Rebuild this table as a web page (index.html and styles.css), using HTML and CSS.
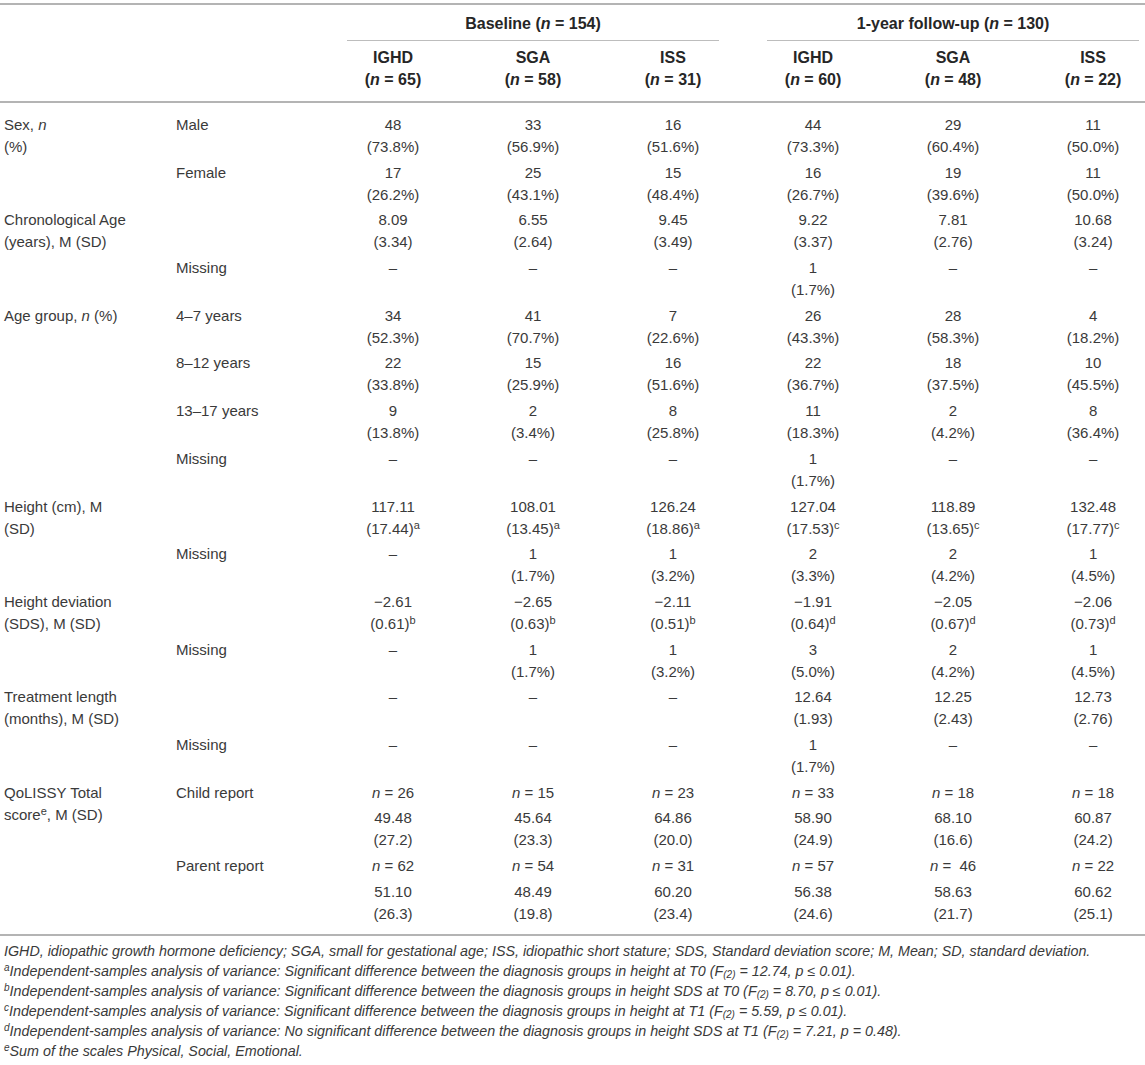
FILE: index.html
```html
<!DOCTYPE html>
<html lang="en">
<head>
<meta charset="utf-8">
<title>Table</title>
<link rel="stylesheet" href="styles.css">
</head>
<body>
<div class="page">
  <div class="clip">
    <table class="tbl">
      <colgroup>
        <col class="c-label">
        <col class="c-sub">
        <col class="c-data"><col class="c-data"><col class="c-data">
        <col class="c-data"><col class="c-data"><col class="c-data">
      </colgroup>
      <thead>
        <tr class="h1">
          <th colspan="2"></th>
          <th colspan="3"><div class="grp">Baseline (<i>n</i> = 154)</div></th>
          <th colspan="3"><div class="grp">1-year follow-up (<i>n</i> = 130)</div></th>
        </tr>
        <tr class="h2">
          <th></th><th></th>
          <th>IGHD<br>(<i>n</i> = 65)</th>
          <th>SGA<br>(<i>n</i> = 58)</th>
          <th>ISS<br>(<i>n</i> = 31)</th>
          <th>IGHD<br>(<i>n</i> = 60)</th>
          <th>SGA<br>(<i>n</i> = 48)</th>
          <th>ISS<br>(<i>n</i> = 22)</th>
        </tr>
      </thead>
      <tbody>
        <tr class="first">
          <td class="lab">Sex, <i>n</i><br>(%)</td><td class="sub">Male</td>
          <td>48<br>(73.8%)</td><td>33<br>(56.9%)</td><td>16<br>(51.6%)</td>
          <td>44<br>(73.3%)</td><td>29<br>(60.4%)</td><td>11<br>(50.0%)</td>
        </tr>
        <tr>
          <td class="lab"></td><td class="sub">Female</td>
          <td>17<br>(26.2%)</td><td>25<br>(43.1%)</td><td>15<br>(48.4%)</td>
          <td>16<br>(26.7%)</td><td>19<br>(39.6%)</td><td>11<br>(50.0%)</td>
        </tr>
        <tr>
          <td class="lab">Chronological Age<br>(years), M (SD)</td><td class="sub"></td>
          <td>8.09<br>(3.34)</td><td>6.55<br>(2.64)</td><td>9.45<br>(3.49)</td>
          <td>9.22<br>(3.37)</td><td>7.81<br>(2.76)</td><td>10.68<br>(3.24)</td>
        </tr>
        <tr>
          <td class="lab"></td><td class="sub">Missing</td>
          <td>–</td><td>–</td><td>–</td>
          <td>1<br>(1.7%)</td><td>–</td><td>–</td>
        </tr>
        <tr>
          <td class="lab">Age group, <i>n</i> (%)</td><td class="sub">4–7 years</td>
          <td>34<br>(52.3%)</td><td>41<br>(70.7%)</td><td>7<br>(22.6%)</td>
          <td>26<br>(43.3%)</td><td>28<br>(58.3%)</td><td>4<br>(18.2%)</td>
        </tr>
        <tr>
          <td class="lab"></td><td class="sub">8–12 years</td>
          <td>22<br>(33.8%)</td><td>15<br>(25.9%)</td><td>16<br>(51.6%)</td>
          <td>22<br>(36.7%)</td><td>18<br>(37.5%)</td><td>10<br>(45.5%)</td>
        </tr>
        <tr>
          <td class="lab"></td><td class="sub">13–17 years</td>
          <td>9<br>(13.8%)</td><td>2<br>(3.4%)</td><td>8<br>(25.8%)</td>
          <td>11<br>(18.3%)</td><td>2<br>(4.2%)</td><td>8<br>(36.4%)</td>
        </tr>
        <tr>
          <td class="lab"></td><td class="sub">Missing</td>
          <td>–</td><td>–</td><td>–</td>
          <td>1<br>(1.7%)</td><td>–</td><td>–</td>
        </tr>
        <tr>
          <td class="lab">Height (cm), M<br>(SD)</td><td class="sub"></td>
          <td>117.11<br>(17.44)<sup>a</sup></td><td>108.01<br>(13.45)<sup>a</sup></td><td>126.24<br>(18.86)<sup>a</sup></td>
          <td>127.04<br>(17.53)<sup>c</sup></td><td>118.89<br>(13.65)<sup>c</sup></td><td>132.48<br>(17.77)<sup>c</sup></td>
        </tr>
        <tr>
          <td class="lab"></td><td class="sub">Missing</td>
          <td>–</td><td>1<br>(1.7%)</td><td>1<br>(3.2%)</td>
          <td>2<br>(3.3%)</td><td>2<br>(4.2%)</td><td>1<br>(4.5%)</td>
        </tr>
        <tr>
          <td class="lab">Height deviation<br>(SDS), M (SD)</td><td class="sub"></td>
          <td>−2.61<br>(0.61)<sup>b</sup></td><td>−2.65<br>(0.63)<sup>b</sup></td><td>−2.11<br>(0.51)<sup>b</sup></td>
          <td>−1.91<br>(0.64)<sup>d</sup></td><td>−2.05<br>(0.67)<sup>d</sup></td><td>−2.06<br>(0.73)<sup>d</sup></td>
        </tr>
        <tr>
          <td class="lab"></td><td class="sub">Missing</td>
          <td>–</td><td>1<br>(1.7%)</td><td>1<br>(3.2%)</td>
          <td>3<br>(5.0%)</td><td>2<br>(4.2%)</td><td>1<br>(4.5%)</td>
        </tr>
        <tr>
          <td class="lab">Treatment length<br>(months), M (SD)</td><td class="sub"></td>
          <td>–</td><td>–</td><td>–</td>
          <td>12.64<br>(1.93)</td><td>12.25<br>(2.43)</td><td>12.73<br>(2.76)</td>
        </tr>
        <tr>
          <td class="lab"></td><td class="sub">Missing</td>
          <td>–</td><td>–</td><td>–</td>
          <td>1<br>(1.7%)</td><td>–</td><td>–</td>
        </tr>
        <tr>
          <td class="lab" rowspan="4">QoLISSY Total<br>score<sup>e</sup>, M (SD)</td><td class="sub">Child report</td>
          <td><i>n</i> = 26</td><td><i>n</i> = 15</td><td><i>n</i> = 23</td>
          <td><i>n</i> = 33</td><td><i>n</i> = 18</td><td><i>n</i> = 18</td>
        </tr>
        <tr>
          <td class="sub"></td>
          <td>49.48<br>(27.2)</td><td>45.64<br>(23.3)</td><td>64.86<br>(20.0)</td>
          <td>58.90<br>(24.9)</td><td>68.10<br>(16.6)</td><td>60.87<br>(24.2)</td>
        </tr>
        <tr>
          <td class="sub">Parent report</td>
          <td><i>n</i> = 62</td><td><i>n</i> = 54</td><td><i>n</i> = 31</td>
          <td><i>n</i> = 57</td><td><i>n</i> =&nbsp; 46</td><td><i>n</i> = 22</td>
        </tr>
        <tr class="last">
          <td class="sub"></td>
          <td>51.10<br>(26.3)</td><td>48.49<br>(19.8)</td><td>60.20<br>(23.4)</td>
          <td>56.38<br>(24.6)</td><td>58.63<br>(21.7)</td><td>60.62<br>(25.1)</td>
        </tr>
      </tbody>
    </table>
  </div>
  <div class="notes">
    <p>IGHD, idiopathic growth hormone deficiency; SGA, small for gestational age; ISS, idiopathic short stature; SDS, Standard deviation score; M, Mean; SD, standard deviation.</p>
    <p><sup>a</sup>Independent-samples analysis of variance: Significant difference between the diagnosis groups in height at T0 (F<sub>(2)</sub> = 12.74, p ≤ 0.01).</p>
    <p><sup>b</sup>Independent-samples analysis of variance: Significant difference between the diagnosis groups in height SDS at T0 (F<sub>(2)</sub> = 8.70, p ≤ 0.01).</p>
    <p><sup>c</sup>Independent-samples analysis of variance: Significant difference between the diagnosis groups in height at T1 (F<sub>(2)</sub> = 5.59, p ≤ 0.01).</p>
    <p><sup>d</sup>Independent-samples analysis of variance: No significant difference between the diagnosis groups in height SDS at T1 (F<sub>(2)</sub> = 7.21, p = 0.48).</p>
    <p><sup>e</sup>Sum of the scales Physical, Social, Emotional.</p>
  </div>
</div>
</body>
</html>
```

FILE: styles.css
```css
html, body {
  margin: 0;
  padding: 0;
  background: #ffffff;
  overflow: hidden;
}

.page {
  width: 1145px;
  padding-top: 3px;
  font-family: "Liberation Sans", Arial, sans-serif;
  color: #3a3a3a;
}

.clip {
  width: 1145px;
  overflow: hidden;
}

.tbl {
  width: 1163px;
  table-layout: fixed;
  border-collapse: separate;
  border-spacing: 0;
  font-size: 15px;
  line-height: 22px;
}

.c-label { width: 176px; }
.c-sub { width: 147px; }
.c-data { width: 140px; }

.tbl th {
  font-size: 16px;
  font-weight: bold;
  color: #262626;
  text-align: center;
  vertical-align: top;
  padding: 0;
}

.h1 th {
  border-top: 2px solid #b4b4b4;
  padding-top: 8px;
}

.grp {
  margin: 0 24px;
  padding-bottom: 5px;
  border-bottom: 1.5px solid #bdbdbd;
}

.h2 th {
  padding-top: 6px;
  padding-bottom: 10px;
  border-bottom: 2px solid #b4b4b4;
}

.tbl td {
  padding: 1.85px 0;
  text-align: center;
  vertical-align: top;
}

.tbl td.lab {
  text-align: left;
  padding-left: 4px;
}

.tbl td.sub {
  text-align: left;
}

.tbl tr.first td {
  padding-top: 11px;
}

.tbl tr.last td {
  padding-bottom: 9px;
  border-bottom: 2px solid #b4b4b4;
}

.tbl td.lab[rowspan] {
  border-bottom: 2px solid #b4b4b4;
  padding-bottom: 9px;
}

sup {
  font-size: 11px;
  line-height: 0;
  vertical-align: 5px;
}

.notes {
  padding: 5px 0 0 4px;
  font-size: 14.3px;
  line-height: 20px;
  font-style: italic;
  color: #3a3a3a;
}

.notes p {
  margin: 0;
  white-space: nowrap;
}

.notes sup {
  font-size: 10px;
  vertical-align: 5px;
}

.notes sub {
  font-size: 10px;
  line-height: 0;
  vertical-align: -2px;
}
```
